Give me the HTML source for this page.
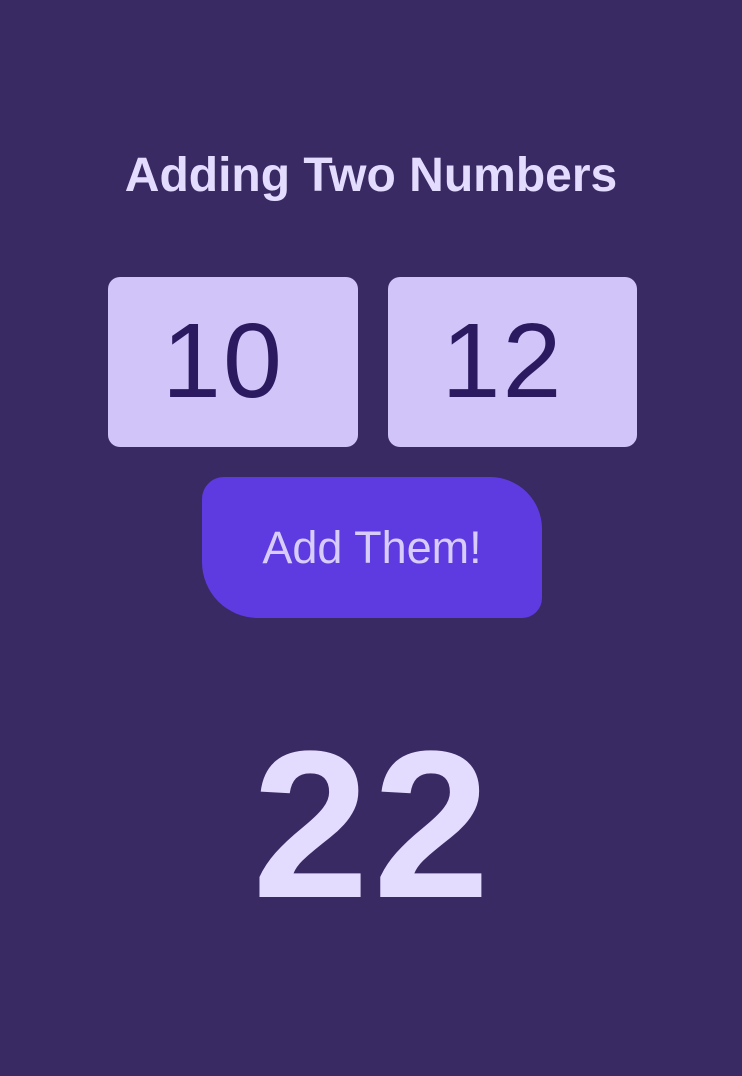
<!DOCTYPE html>
<html><head><style>
body{margin:0;width:742px;height:1076px;background:#3a2a64;font-family:"Liberation Sans",Arial,sans-serif;position:relative;overflow:hidden}
.t{position:absolute;left:0;width:742px;text-align:center;top:148px;font-size:48px;font-weight:bold;color:#e4dcff;line-height:56px}
.b{position:absolute;top:277px;width:250px;height:170px;background:#d0c4f8;border-radius:12px;color:#2c1a60;font-size:106px;line-height:168px;text-align:center;box-sizing:border-box;padding-right:20px;letter-spacing:2px}
.btn{position:absolute;left:202px;top:477px;width:340px;height:141px;background:#5e3be0;border-radius:22px 52px 20px 56px;color:#d7ccfa;font-size:45px;line-height:141px;text-align:center}
.r{position:absolute;left:0;width:742px;text-align:center;top:700px;font-size:210px;font-weight:bold;color:#e4dcff;line-height:250px;letter-spacing:4px;text-indent:4px}
</style></head><body>
<div class="t">Adding Two Numbers</div>
<div class="b" style="left:108px">10</div>
<div class="b" style="left:388px;width:249px">12</div>
<div class="btn">Add Them!</div>
<div class="r">22</div>
</body></html>
